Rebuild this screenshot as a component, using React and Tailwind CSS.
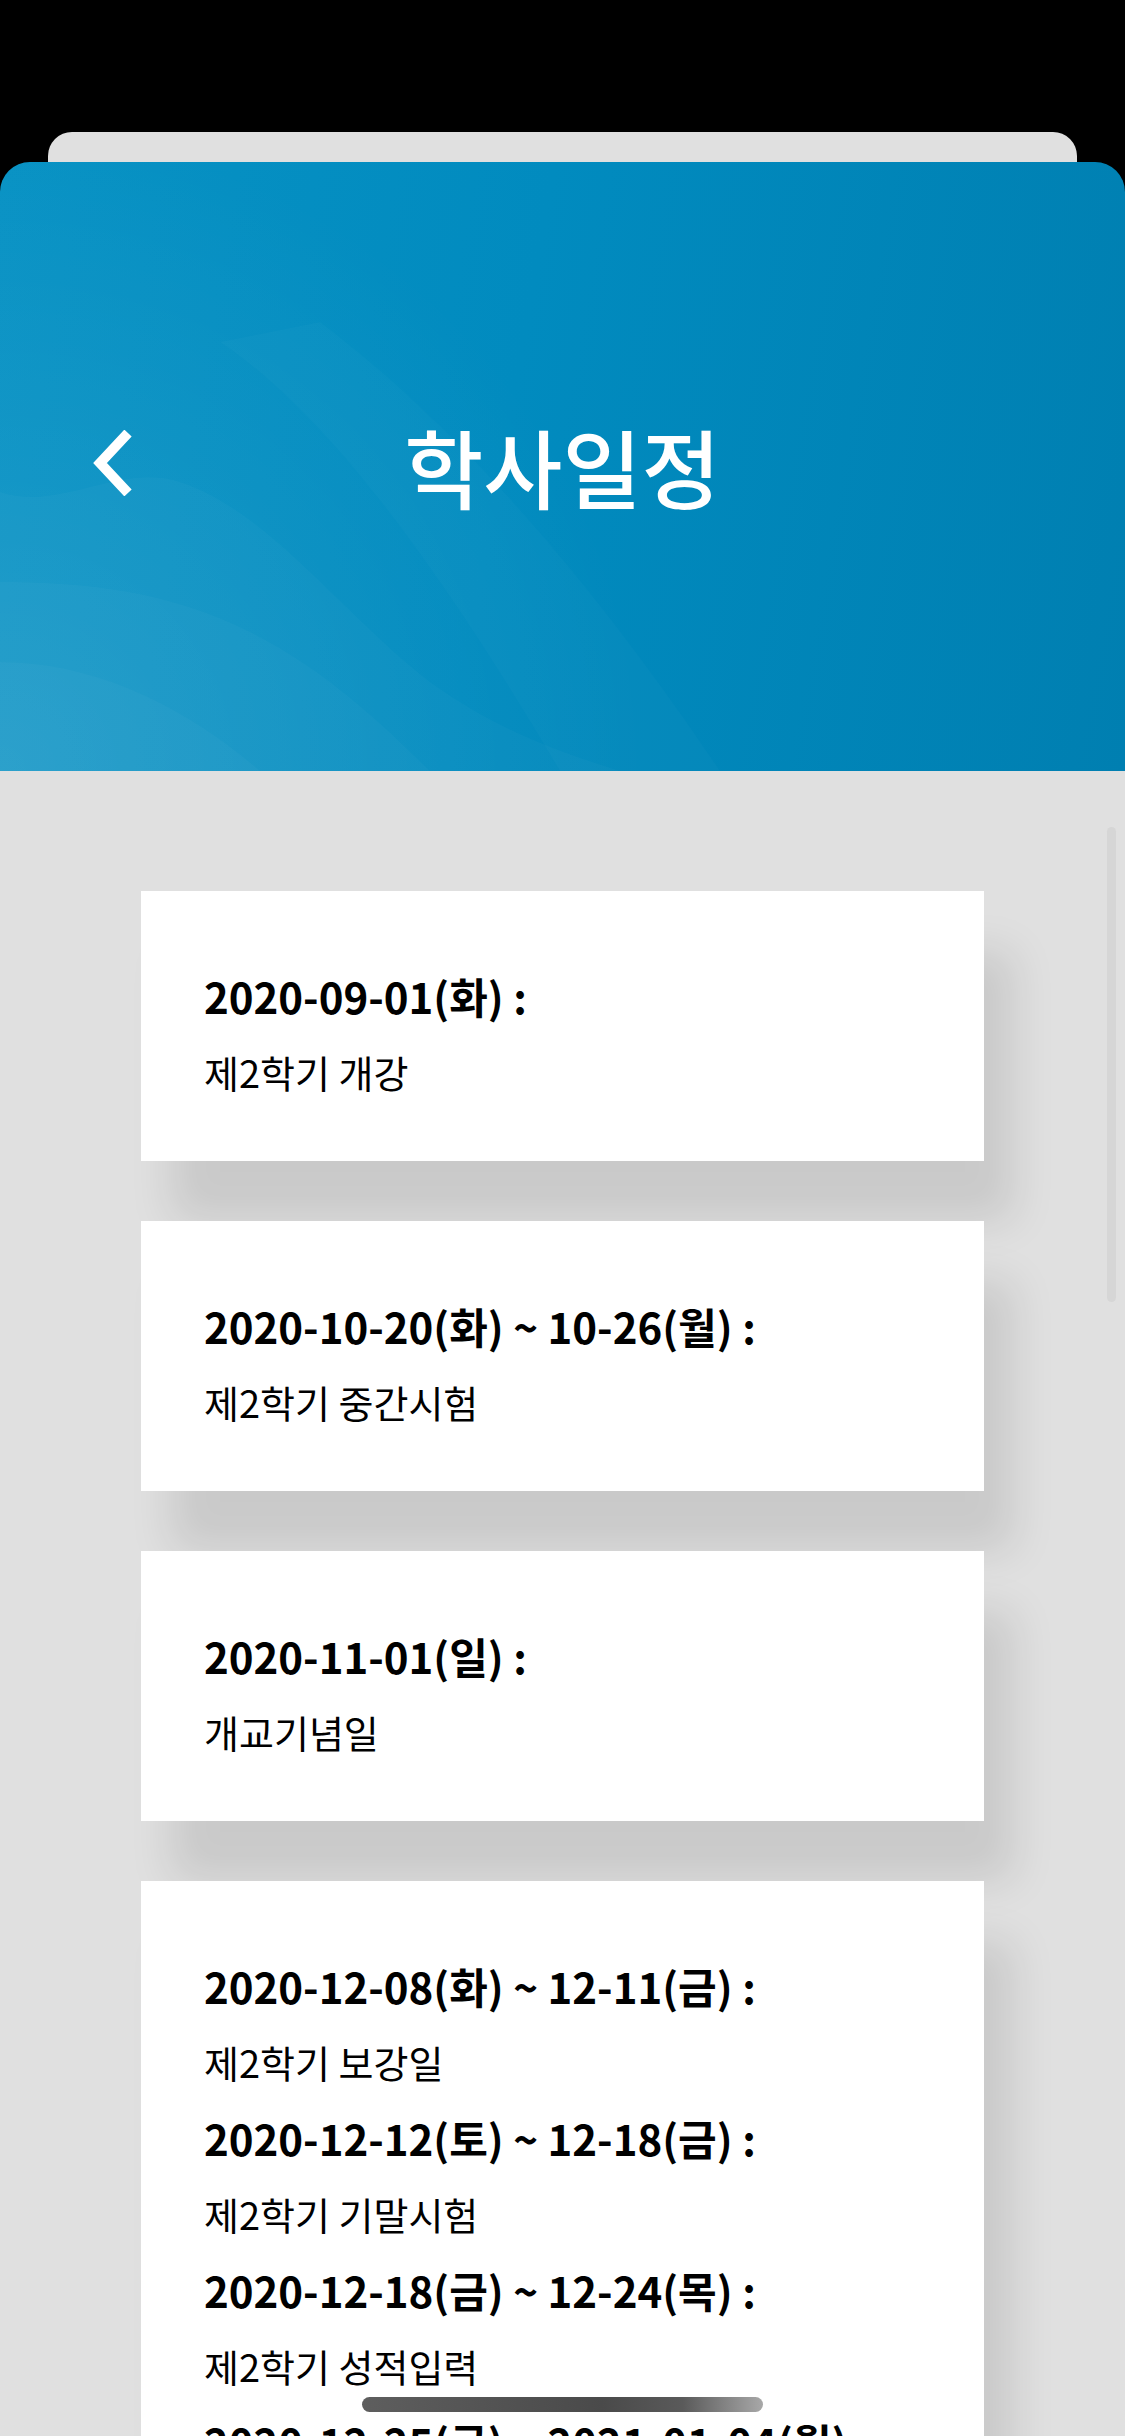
import React from 'react'

const schedule = [
  [{ date: '2020-09-01(화) :', title: '제2학기 개강' }],
  [{ date: '2020-10-20(화) ~ 10-26(월) :', title: '제2학기 중간시험' }],
  [{ date: '2020-11-01(일) :', title: '개교기념일' }],
  [
    { date: '2020-12-08(화) ~ 12-11(금) :', title: '제2학기 보강일' },
    { date: '2020-12-12(토) ~ 12-18(금) :', title: '제2학기 기말시험' },
    { date: '2020-12-18(금) ~ 12-24(목) :', title: '제2학기 성적입력' },
    { date: '2020-12-25(금) ~ 2021-01-04(월) :', title: '동계방학' },
  ],
]

const font = { fontFamily: '"Noto Sans CJK KR", "Noto Sans", sans-serif' }

const Header = () => (
  <div className="relative h-[609px] overflow-hidden rounded-t-[30px] bg-[linear-gradient(100deg,#0892c4_0%,#018bbf_45%,#007fb1_100%)]">
    {/* soft waves in the lower left */}
    <svg className="absolute inset-0" width="1125" height="609" viewBox="0 0 1125 609">
      <defs>
        <radialGradient id="glow" cx="0" cy="609" r="650" gradientUnits="userSpaceOnUse">
          <stop offset="0" stopColor="#ffffff" stopOpacity="0.09" />
          <stop offset="1" stopColor="#ffffff" stopOpacity="0" />
        </radialGradient>
      </defs>
      <rect x="0" y="0" width="1125" height="609" fill="url(#glow)" />
      <path d="M0 330 C60 350 120 300 180 320 C270 350 340 450 430 520 C500 570 560 590 620 609 L0 609 Z" fill="#ffffff" opacity="0.025" />
      <path d="M0 420 C90 420 170 430 250 470 C330 510 390 570 430 609 L0 609 Z" fill="#ffffff" opacity="0.025" />
      <path d="M0 500 C90 500 180 540 260 609 L0 609 Z" fill="#ffffff" opacity="0.025" />
      <path d="M220 180 C340 260 460 440 560 609 L720 609 C620 460 480 280 320 160 Z" fill="#ffffff" opacity="0.02" />
    </svg>
    <div className="relative flex h-full items-center">
      <svg className="absolute left-[92px] top-[268px]" width="44" height="66" viewBox="0 0 44 66">
        <polyline points="36,3 8,33 36,63" fill="none" stroke="#ffffff" strokeWidth="10" strokeLinecap="butt" strokeLinejoin="miter" />
      </svg>
      <h1 className="w-full text-center text-[86px] font-medium leading-none text-white -mt-[2px]" style={font}>
        학사일정
      </h1>
    </div>
  </div>
)

const Card = ({ items }) => (
  <div className="bg-white pl-[63px] pr-6 pt-[67px] pb-[51px] shadow-[30px_60px_40px_rgba(0,0,0,0.1)]" style={font}>
    {items.map((item) => (
      <div key={item.date}>
        <p className="text-[42px] font-semibold leading-[76px] text-black">{item.date}</p>
        <p className="text-[38px] font-normal leading-[76px] text-black">{item.title}</p>
      </div>
    ))}
  </div>
)

export default function App() {
  return (
    <div className="relative h-[2436px] w-[1125px] overflow-hidden bg-black">
      <div className="h-[132px]" />
      <div className="mx-[48px] h-[30px] rounded-t-[24px] bg-[#e0e0e0]" />
      <Header />

      <div className="relative h-[1665px] bg-[#e0e0e0]">
        <div className="flex flex-col gap-[60px] pl-[141px] pr-[141px] pt-[120px]">
          {schedule.map((items, i) => (
            <Card key={i} items={items} />
          ))}
        </div>
        {/* scrollbar */}
        <div className="absolute left-[1107px] top-[56px] h-[475px] w-[9px] rounded-full bg-[#d6d6d6]" />
      </div>

      {/* home indicator */}
      <div className="absolute bottom-[24px] left-[362px] h-[15px] w-[401px] rounded-full bg-[linear-gradient(90deg,#5e5e5e_0%,#4a4a4a_60%,#5a5a5a_80%,#a8a8a8_100%)]" />
    </div>
  )
}
